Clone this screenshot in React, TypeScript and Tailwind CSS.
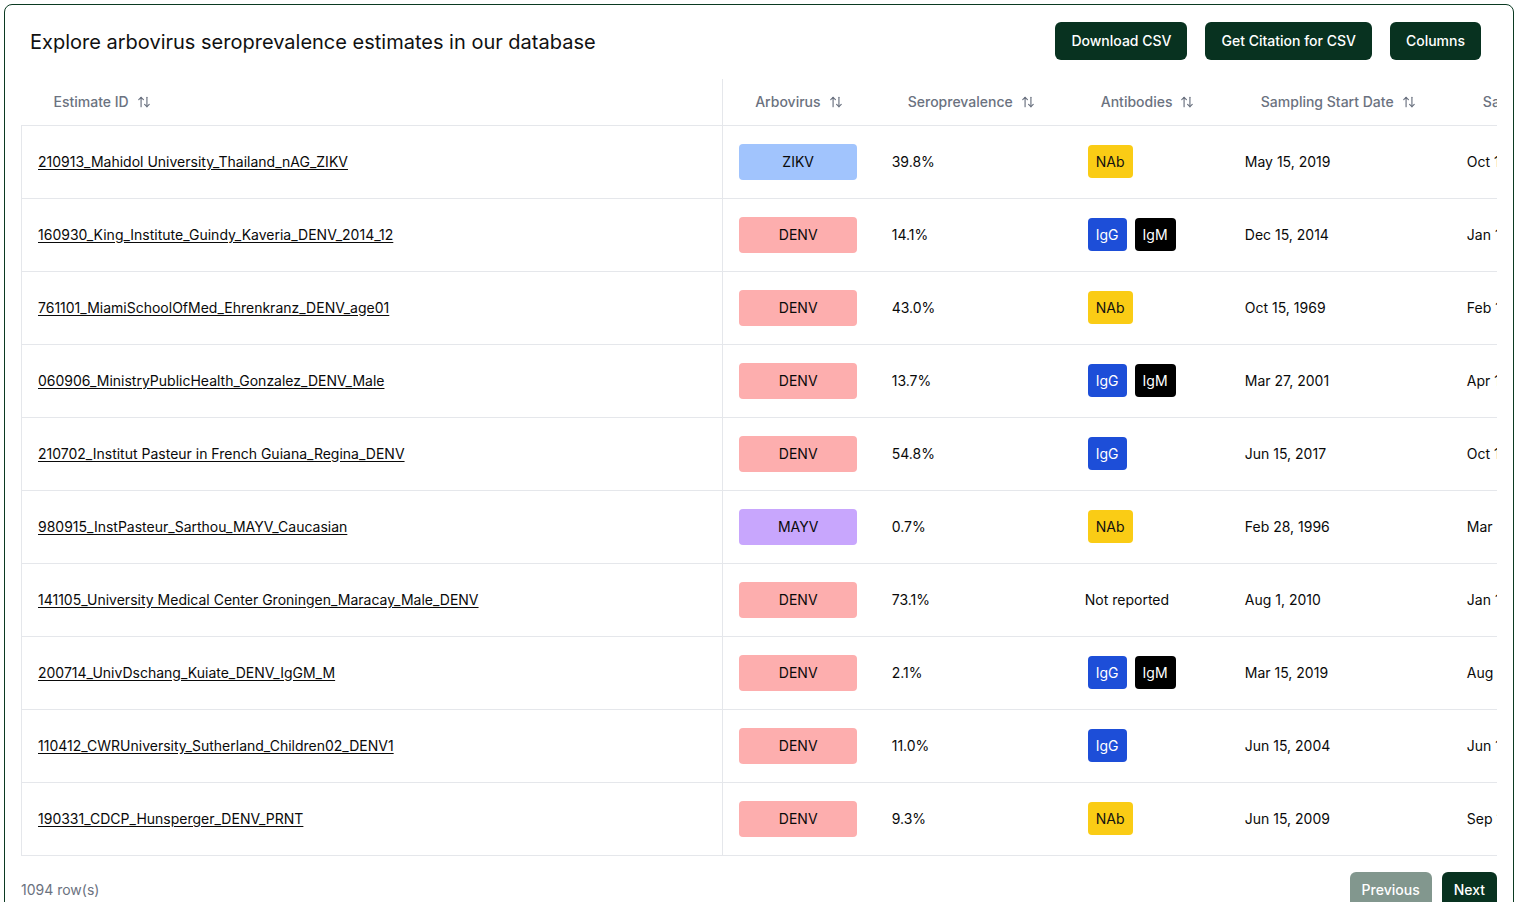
import { ArrowUpDown } from "lucide-react";

type Row = {
  id: string;
  arbovirus: "ZIKV" | "DENV" | "MAYV";
  seroprevalence: string;
  antibodies: string[];
  start: string;
  end: string;
};

const rows: Row[] = [
  { id: "210913_Mahidol University_Thailand_nAG_ZIKV", arbovirus: "ZIKV", seroprevalence: "39.8%", antibodies: ["NAb"], start: "May 15, 2019", end: "Oct 15, 2019" },
  { id: "160930_King_Institute_Guindy_Kaveria_DENV_2014_12", arbovirus: "DENV", seroprevalence: "14.1%", antibodies: ["IgG", "IgM"], start: "Dec 15, 2014", end: "Jan 15, 2015" },
  { id: "761101_MiamiSchoolOfMed_Ehrenkranz_DENV_age01", arbovirus: "DENV", seroprevalence: "43.0%", antibodies: ["NAb"], start: "Oct 15, 1969", end: "Feb 15, 1970" },
  { id: "060906_MinistryPublicHealth_Gonzalez_DENV_Male", arbovirus: "DENV", seroprevalence: "13.7%", antibodies: ["IgG", "IgM"], start: "Mar 27, 2001", end: "Apr 15, 2001" },
  { id: "210702_Institut Pasteur in French Guiana_Regina_DENV", arbovirus: "DENV", seroprevalence: "54.8%", antibodies: ["IgG"], start: "Jun 15, 2017", end: "Oct 15, 2017" },
  { id: "980915_InstPasteur_Sarthou_MAYV_Caucasian", arbovirus: "MAYV", seroprevalence: "0.7%", antibodies: ["NAb"], start: "Feb 28, 1996", end: "Mar 31, 1996" },
  { id: "141105_University Medical Center Groningen_Maracay_Male_DENV", arbovirus: "DENV", seroprevalence: "73.1%", antibodies: [], start: "Aug 1, 2010", end: "Jan 15, 2011" },
  { id: "200714_UnivDschang_Kuiate_DENV_IgGM_M", arbovirus: "DENV", seroprevalence: "2.1%", antibodies: ["IgG", "IgM"], start: "Mar 15, 2019", end: "Aug 15, 2019" },
  { id: "110412_CWRUniversity_Sutherland_Children02_DENV1", arbovirus: "DENV", seroprevalence: "11.0%", antibodies: ["IgG"], start: "Jun 15, 2004", end: "Jun 15, 2005" },
  { id: "190331_CDCP_Hunsperger_DENV_PRNT", arbovirus: "DENV", seroprevalence: "9.3%", antibodies: ["NAb"], start: "Jun 15, 2009", end: "Sep 15, 2009" },
];

const virusColour: Record<Row["arbovirus"], string> = {
  ZIKV: "bg-[#a1c4fd]",
  DENV: "bg-[#fdaeae]",
  MAYV: "bg-[#c8a6fd]",
};

const antibodyColour: Record<string, string> = {
  NAb: "bg-[#facc15] text-[#111]",
  IgG: "bg-[#1d4ed8] text-white",
  IgM: "bg-black text-white",
};

function SortHeader({ label }: { label: string }) {
  return (
    <span className="inline-flex items-center gap-2 px-4 text-sm font-medium whitespace-nowrap text-[#6b7280]">
      {label}
      <ArrowUpDown className="h-[14px] w-[14px]" strokeWidth={2} aria-hidden="true" />
    </span>
  );
}

export default function App() {
  return (
    <div className="min-h-screen bg-white pt-1 pl-1 pr-[5px] font-['Inter',sans-serif] text-[#0a0a0a]">
      <div className="rounded-lg border border-[#0b3a22] px-4 pt-[17px]">
        <div className="flex items-center justify-between">
          <h1 className="mt-[2px] pl-[9px] text-[20px] font-normal text-[#111]">
            Explore arbovirus seroprevalence estimates in our database
          </h1>
          <div className="flex gap-[18px] pr-4">
            {["Download CSV", "Get Citation for CSV", "Columns"].map((label) => (
              <button
                key={label}
                className="h-[38px] rounded-md bg-[#083220] px-4 text-sm font-medium text-white"
              >
                {label}
              </button>
            ))}
          </div>
        </div>

        <div className="mt-[19px] overflow-hidden">
          <table className="w-[1800px] table-fixed border-collapse text-sm">
            <colgroup>
              <col className="w-[701px]" />
              <col className="w-[153px]" />
              <col className="w-[193px]" />
              <col className="w-[160px]" />
              <col className="w-[222px]" />
              <col className="w-[220px]" />
              <col className="w-[150px]" />
            </colgroup>
            <thead>
              <tr className="h-[46px] border-b border-[#e5e7eb] text-left">
                <th className="border-r border-[#e5e7eb] px-4 font-normal">
                  <SortHeader label="Estimate ID" />
                </th>
                <th className="px-4 font-normal"><SortHeader label="Arbovirus" /></th>
                <th className="px-4 font-normal"><SortHeader label="Seroprevalence" /></th>
                <th className="px-4 font-normal"><SortHeader label="Antibodies" /></th>
                <th className="px-4 font-normal"><SortHeader label="Sampling Start Date" /></th>
                <th className="px-4 font-normal"><SortHeader label="Sampling End Date" /></th>
                <th className="px-4 font-normal"><SortHeader label="Country" /></th>
              </tr>
            </thead>
            <tbody>
              {rows.map((row) => (
                <tr key={row.id} className="h-[73px] border-b border-[#e5e7eb]">
                  <td className="border-r border-l border-[#e5e7eb] px-4">
                    <a href="#" className="underline underline-offset-2">{row.id}</a>
                  </td>
                  <td className="px-4">
                    <div className={`flex h-9 w-[118px] items-center justify-center rounded ${virusColour[row.arbovirus]}`}>
                      {row.arbovirus}
                    </div>
                  </td>
                  <td className="px-4">{row.seroprevalence}</td>
                  <td className="px-4">
                    {row.antibodies.length === 0 ? (
                      "Not reported"
                    ) : (
                      <div className="ml-[3px] flex gap-2">
                        {row.antibodies.map((ab) => (
                          <span
                            key={ab}
                            className={`flex h-[33px] items-center rounded px-2 ${antibodyColour[ab]}`}
                          >
                            {ab}
                          </span>
                        ))}
                      </div>
                    )}
                  </td>
                  <td className="px-4">{row.start}</td>
                  <td className="px-4 whitespace-nowrap">{row.end}</td>
                  <td className="px-4">—</td>
                </tr>
              ))}
            </tbody>
          </table>
        </div>

        <div className="flex items-center justify-between py-4">
          <span className="text-sm text-[#6b7280]">1094 row(s)</span>
          <div className="flex gap-[10px]">
            <button disabled className="h-9 rounded-md bg-[#083220] px-3 text-sm font-medium text-white opacity-50">
              Previous
            </button>
            <button className="h-9 rounded-md bg-[#083220] px-3 text-sm font-medium text-white">
              Next
            </button>
          </div>
        </div>
      </div>
    </div>
  );
}
